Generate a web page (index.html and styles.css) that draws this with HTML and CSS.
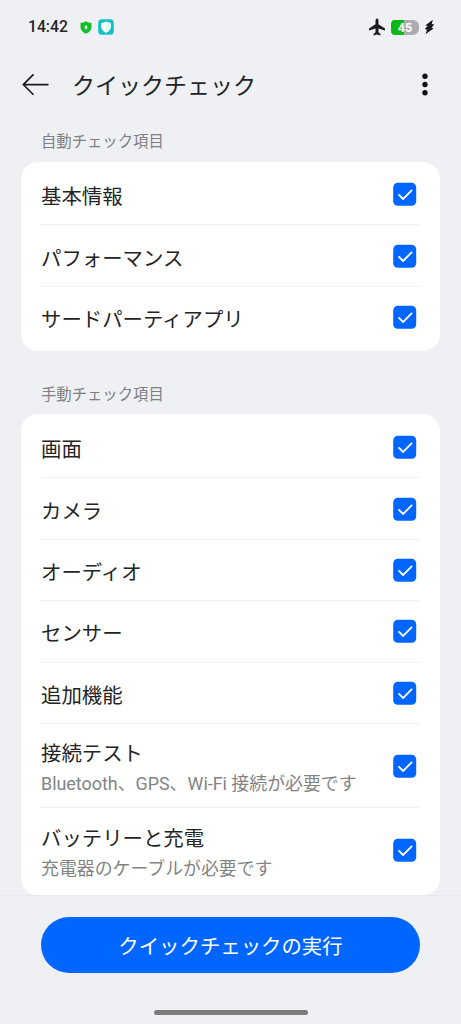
FILE: index.html
```html
<!DOCTYPE html>
<html lang="ja">
<head>
<meta charset="utf-8">
<title>クイックチェック</title>
<link rel="stylesheet" href="styles.css">
</head>
<body>
<svg class="defs" width="0" height="0" aria-hidden="true">
  <symbol id="check" viewBox="0 0 24 24">
    <rect x="0.2" y="0.8" width="23" height="23" rx="4.6" fill="#0066ff"/>
    <path d="M6 12.9 10.1 17 18.6 8.4" fill="none" stroke="#fff" stroke-width="1.8" stroke-linecap="round" stroke-linejoin="round"/>
  </symbol>
</svg>
<div class="screen">
  <header class="status">
    <span class="time">14:42</span>
    <svg class="shield" width="12" height="13" viewBox="0 0 12 13"><path d="M6 .3Q8.6 2 11.5 2.1V6.2Q11.3 10.6 6 12.8.7 10.6.5 6.2V2.1Q3.4 2 6 .3Z" fill="#14bd2b"/><path d="M6 3.8 7.6 6.2 6 9 4.4 6.2Z" fill="#e8ffe8"/></svg>
    <svg class="guard" width="16" height="16" viewBox="0 0 16 16"><rect x=".2" y=".2" width="15.6" height="15.6" rx="3.6" fill="#12c2c6"/><path d="M8 2.5Q10.2 3.8 12.7 4V8Q12.3 11.8 8 13.8 3.7 11.8 3.3 8V4Q5.8 3.8 8 2.5Z" fill="#fff"/><path d="M8 2.5Q10.2 3.8 12.7 4V8Q12.3 11.8 8 13.8Z" fill="#e4f8f8"/></svg>
    <span class="spacer"></span>
    <svg class="plane" width="18" height="18" viewBox="0 0 18 18"><path d="M9 .6Q10.5.6 10.5 3V6.3L17 10.5V12.4L10.5 10.5V14.2L12.5 15.9V17.4L9 16.4 5.5 17.4V15.9L7.5 14.2V10.5L1 12.4V10.5L7.5 6.3V3Q7.5.6 9 .6Z" fill="#1b1c1f"/></svg>
    <span class="battery">45</span>
    <svg class="bolt" width="11" height="16" viewBox="0 0 11 16"><path d="M8.8.7 1.5 6.2 3.6 6.9 .8 10 3.1 10.7 1.4 15.2 9.6 9.4 7.6 8.7 10.2 5.6 7.8 4.9Z" fill="#1b1c1f"/></svg>
  </header>
  <nav class="appbar">
    <svg class="back" width="27" height="24" viewBox="0 0 27 24"><path d="M26.5 11.6H1.3M11.5 1.4 1.3 11.6 11.5 21.8" fill="none" stroke="#1a1a1c" stroke-width="1.6"/></svg>
    <h1 class="title">クイックチェック</h1>
    <svg class="more" width="6" height="24" viewBox="0 0 6 24"><g fill="#111"><circle cx="3" cy="3.3" r="2.7"/><circle cx="3" cy="11.5" r="2.7"/><circle cx="3" cy="19.7" r="2.7"/></g></svg>
  </nav>
  <main class="content">
    <h2 class="label">自動チェック項目</h2>
    <section class="card">
      <div class="row"><span class="name">基本情報</span><svg class="box"><use href="#check"/></svg></div>
      <div class="row"><span class="name">パフォーマンス</span><svg class="box"><use href="#check"/></svg></div>
      <div class="row"><span class="name">サードパーティアプリ</span><svg class="box"><use href="#check"/></svg></div>
    </section>
    <h2 class="label second">手動チェック項目</h2>
    <section class="card">
      <div class="row"><span class="name">画面</span><svg class="box"><use href="#check"/></svg></div>
      <div class="row"><span class="name">カメラ</span><svg class="box"><use href="#check"/></svg></div>
      <div class="row"><span class="name">オーディオ</span><svg class="box"><use href="#check"/></svg></div>
      <div class="row"><span class="name">センサー</span><svg class="box"><use href="#check"/></svg></div>
      <div class="row"><span class="name">追加機能</span><svg class="box"><use href="#check"/></svg></div>
      <div class="row tall"><div class="texts"><span class="name">接続テスト</span><span class="note">Bluetooth、GPS、Wi-Fi 接続が必要です</span></div><svg class="box"><use href="#check"/></svg></div>
      <div class="row tall"><div class="texts"><span class="name">バッテリーと充電</span><span class="note">充電器のケーブルが必要です</span></div><svg class="box"><use href="#check"/></svg></div>
    </section>
  </main>
  <footer class="footer">
    <button class="run">クイックチェックの実行</button>
    <div class="handle"></div>
  </footer>
</div>
</body>
</html>
```
FILE: styles.css
```css
* { box-sizing: border-box; }
body { margin: 0; background: #eef0f3; color: #242426; font-family: Roboto, "Noto Sans CJK JP", sans-serif; }
.defs { display: block; height: 0; }
.screen { display: flex; flex-direction: column; width: 461px; height: 1024px; overflow: hidden; }
h1, h2 { margin: 0; font-weight: 400; }
.status { display: flex; align-items: center; height: 54px; padding: 0 26px 0 28px; flex: none; }
.time { font-size: 15.7px; font-weight: 500; width: 52px; margin-top: -1px; }
.guard { margin-left: 6px; }
.spacer { flex: 1; }
.battery { width: 28px; height: 15px; margin: 0 5px 0 5px; border-radius: 4px 6px 6px 4px; background: linear-gradient(to right, #0db814 45%, #adadad 45%); color: #fff; font-size: 12.5px; font-weight: 700; line-height: 16px; text-align: center; }
.appbar { display: flex; align-items: center; height: 61px; padding: 0 33px 0 22px; flex: none; }
.title { flex: 1; margin-left: 23px; padding-top: 5px; font-size: 23px; line-height: 34px; }
.content { flex: none; height: 780px; padding: 0 21px 0 20.5px; }
.label { height: 46.5px; padding: 16px 0 0 20.5px; font-size: 15.35px; line-height: 22px; color: #7e8083; }
.label.second { height: 63.6px; padding-top: 33px; }
.card { padding: 2.5px 20.5px 2.5px; border-radius: 17px; background: #fff; }
.row { display: flex; align-items: center; justify-content: space-between; height: 61.45px; padding-right: 3px; border-bottom: 1px solid #f0f0f1; }
.row:last-child { border-bottom-color: transparent; }
.row.tall { height: 84.4px; }
.texts { display: flex; flex-direction: column; padding-top: 2px; }
.name { padding-top: 6px; font-size: 20.4px; line-height: 30px; white-space: nowrap; }
.texts .name { padding-top: 5px; }
.note { font-size: 17.9px; line-height: 30px; color: #838385; white-space: nowrap; }
.box { width: 24px; height: 24px; flex: none; }
.footer { flex: 1; display: flex; flex-direction: column; align-items: center; border-top: 1px solid #e7e9eb; padding-top: 20.5px; }
.run { width: 379px; height: 56px; border: 0; border-radius: 28px; background: #0066ff; color: #fff; font: 400 20.4px/52px Roboto, "Noto Sans CJK JP", sans-serif; padding: 4px 0 0; }
.handle { width: 154px; height: 5px; margin-top: 37px; border-radius: 3px; background: #7b7c7d; }
```
